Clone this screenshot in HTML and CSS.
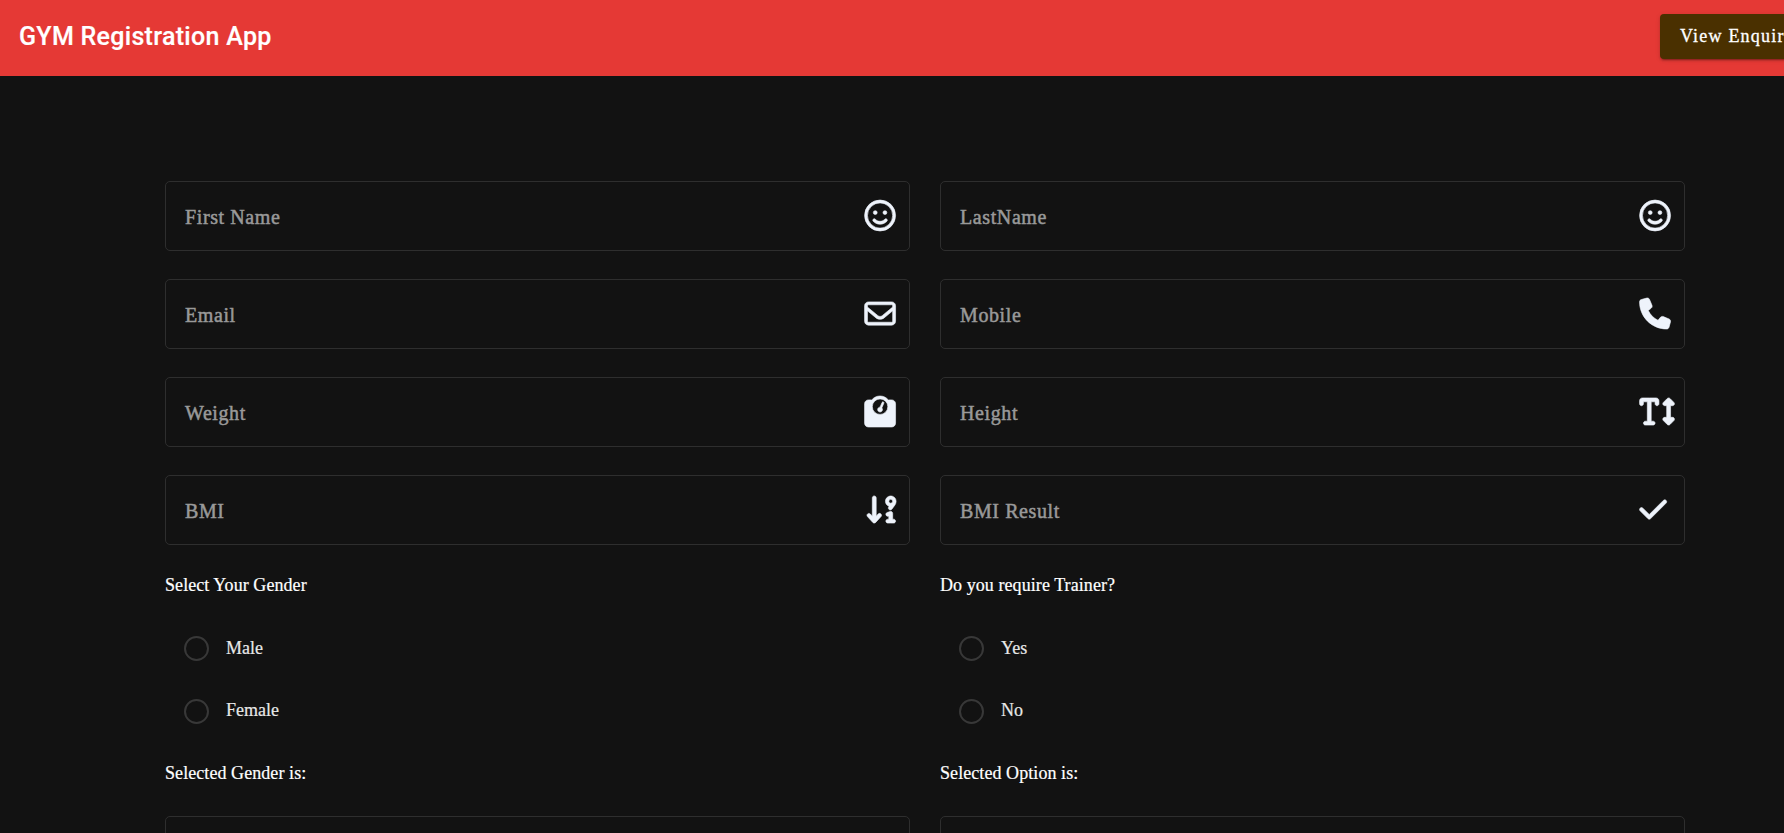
FILE: index.html
```html
<!DOCTYPE html>
<html lang="en">
<head>
<meta charset="utf-8">
<title>GYM Registration App</title>
<link rel="stylesheet" href="styles.css">
</head>
<body>
<header class="toolbar"><span class="title">GYM Registration App</span><button class="enquiry">View Enquiries</button></header>
<main class="form">
<div class="field"><span class="label">First Name</span><svg class="icon" viewBox="0 0 576 512"><path d="M464 256A208 208 0 1 0 48 256a208 208 0 1 0 416 0zM0 256a256 256 0 1 1 512 0A256 256 0 1 1 0 256zm177.600 62.100C192.800 334.500 218.800 352 256 352s63.200-17.500 78.400-33.900c9-9.700 24.200-10.400 33.900-1.400s10.400 24.200 1.400 33.900c-22 23.800-60 49.400-113.600 49.400s-91.700-25.500-113.600-49.400c-9-9.700-8.400-24.900 1.400-33.900s24.900-8.400 33.900 1.400zM144.400 208a32 32 0 1 1 64 0 32 32 0 1 1 -64 0zm192-32a32 32 0 1 1 0 64 32 32 0 1 1 0-64z"/></svg></div>
<div class="field"><span class="label">LastName</span><svg class="icon" viewBox="0 0 576 512"><path d="M464 256A208 208 0 1 0 48 256a208 208 0 1 0 416 0zM0 256a256 256 0 1 1 512 0A256 256 0 1 1 0 256zm177.600 62.100C192.800 334.500 218.800 352 256 352s63.200-17.500 78.400-33.900c9-9.700 24.200-10.400 33.900-1.400s10.400 24.200 1.400 33.900c-22 23.800-60 49.400-113.600 49.400s-91.700-25.500-113.600-49.400c-9-9.700-8.400-24.900 1.400-33.900s24.900-8.400 33.900 1.400zM144.400 208a32 32 0 1 1 64 0 32 32 0 1 1 -64 0zm192-32a32 32 0 1 1 0 64 32 32 0 1 1 0-64z"/></svg></div>
<div class="field"><span class="label">Email</span><svg class="icon" viewBox="0 0 576 512"><path d="M64 112c-8.800 0-16 7.200-16 16v22.100L220.500 291.700c20.700 17 50.400 17 71.100 0L464 150.100V128c0-8.800-7.200-16-16-16H64zM48 212.200V384c0 8.800 7.200 16 16 16H448c8.800 0 16-7.200 16-16V212.200L322 328.800c-38.400 31.500-93.700 31.500-132 0L48 212.200zM0 128C0 92.700 28.700 64 64 64H448c35.300 0 64 28.700 64 64V384c0 35.300-28.700 64-64 64H64c-35.300 0-64-28.700-64-64V128z"/></svg></div>
<div class="field"><span class="label">Mobile</span><svg class="icon" viewBox="0 0 576 512"><path d="M164.900 24.600c-7.700-18.600-28-28.500-47.400-23.200l-88 24C12.100 30.200 0 46 0 64C0 311.400 200.600 512 448 512c18 0 33.800-12.100 38.600-29.500l24-88c5.300-19.400-4.600-39.700-23.200-47.400l-96-40c-16.300-6.800-35.200-2.100-46.300 11.600L304.700 368C234.300 334.700 177.300 277.700 144 207.300L193.300 167c13.700-11.200 18.400-30 11.600-46.300l-40-96z"/></svg></div>
<div class="field"><span class="label">Weight</span><svg class="icon" viewBox="0 0 576 512"><path d="M128 176a128 128 0 1 1 256 0 128 128 0 1 1 -256 0zM391.800 64C359.500 24.900 310.700 0 256 0S152.500 24.900 120.200 64H64C28.700 64 0 92.700 0 128V448c0 35.300 28.700 64 64 64H448c35.300 0 64-28.700 64-64V128c0-35.300-28.700-64-64-64H391.800zM296 224c0-10.600-4.100-20.200-10.900-27.400l33.600-78.300c3.500-8.100-.3-17.500-8.400-21s-17.500 .3-21 8.400L255.700 184c-22 .1-39.700 18-39.700 40c0 22.100 17.900 40 40 40s40-17.900 40-40z"/></svg></div>
<div class="field"><span class="label">Height</span><svg class="icon" viewBox="0 0 576 512"><path d="M64 128V96h64l0 320H96c-17.700 0-32 14.300-32 32s14.300 32 32 32H224c17.700 0 32-14.300 32-32s-14.300-32-32-32H192l0-320h64v32c0 17.700 14.300 32 32 32s32-14.300 32-32V80c0-26.500-21.500-48-48-48H160 48C21.500 32 0 53.500 0 80v48c0 17.700 14.300 32 32 32s32-14.300 32-32zM502.600 41.400c-12.500-12.500-32.800-12.500-45.300 0l-64 64c-9.200 9.200-11.900 22.900-6.900 34.900s16.600 19.800 29.600 19.800h32V352H416c-12.900 0-24.600 7.800-29.600 19.800s-2.200 25.700 6.900 34.900l64 64c12.500 12.500 32.800 12.500 45.300 0l64-64c9.200-9.200 11.900-22.900 6.900-34.900s-16.600-19.800-29.600-19.800H512V160h32c12.900 0 24.600-7.800 29.600-19.800s2.200-25.700-6.900-34.900l-64-64z"/></svg></div>
<div class="field"><span class="label">BMI</span><svg class="icon" viewBox="0 0 576 512"><path d="M160 480c9 0 17.500-3.800 23.600-10.400l88-96c11.900-13 11.100-33.300-2-45.200s-33.300-11.100-45.200 2L192 365.700V64c0-17.700-14.300-32-32-32s-32 14.300-32 32V365.700L95.600 330.400c-11.900-13-32.200-13.900-45.200-2s-13.900 32.200-2 45.200l88 96C142.500 476.200 151 480 160 480zM450.700 294c-8.300-6-19.100-7.700-28.800-4.400l-48 16c-16.800 5.600-25.800 23.700-20.200 40.500s23.700 25.800 40.500 20.200l5.900-2V416H384c-17.700 0-32 14.300-32 32s14.300 32 32 32h48 48c17.700 0 32-14.300 32-32s-14.300-32-32-32H464V320c0-10.300-4.900-19.900-13.300-26zM400 120a32 32 0 1 1 64 0 32 32 0 1 1 -64 0zM405.800 203.800l-6.800 9.200c-10.500 14.200-7.500 34.200 6.700 44.800s34.200 7.500 44.800-6.700l48.800-65.800c14-18.900 21.500-41.700 21.500-65.200c0-48.600-39.400-88-88-88s-88 39.400-88 88c0 39.200 25.600 72.400 61.100 83.800z" fill-rule="evenodd"/></svg></div>
<div class="field"><span class="label">BMI Result</span><svg class="icon" viewBox="0 0 576 512"><path d="M438.600 105.400c12.500 12.500 12.500 32.800 0 45.300l-256 256c-12.500 12.500-32.800 12.500-45.300 0l-128-128c-12.500-12.500-12.500-32.800 0-45.300s32.800-12.500 45.300 0L160 338.700 393.400 105.400c12.500-12.500 32.800-12.500 45.300 0z"/></svg></div>
<section class="choices">
<p class="caption">Select Your Gender</p>
<div class="option"><i class="radio"></i><span>Male</span></div>
<div class="option second"><i class="radio"></i><span>Female</span></div>
<p class="caption">Selected Gender is:</p>
</section>
<section class="choices">
<p class="caption">Do you require Trainer?</p>
<div class="option"><i class="radio"></i><span>Yes</span></div>
<div class="option second"><i class="radio"></i><span>No</span></div>
<p class="caption">Selected Option is:</p>
</section>
<div class="field"></div>
<div class="field"></div>
</main>
</body>
</html>
```
FILE: styles.css
```css
* { box-sizing: border-box; }
html { height: 100%; overflow: hidden; background: #121212; }
body { margin: 0; height: 833px; overflow: hidden; background: #121212; color: #fff; font-family: "Liberation Serif", "Times New Roman", serif; }
.toolbar { display: flex; align-items: center; justify-content: space-between; width: 1840px; height: 76px; padding: 0 0 3px 19px; background: #e53935; }
.title { padding-top: 1px; font: 500 25px/36px Roboto, sans-serif; letter-spacing: .3px; -webkit-text-stroke: .2px #fff; }
.enquiry { flex: none; width: 180px; height: 45px; padding: 0 0 0 20px; border: 0; border-radius: 4px; background: #4a3000; color: #fff; font: 18px/45px "Liberation Serif", serif; letter-spacing: 1.2px; text-align: left; -webkit-text-stroke: .3px #fff; box-shadow: 0 3px 1px -2px rgba(0,0,0,.2), 0 2px 2px rgba(0,0,0,.14), 0 1px 5px rgba(0,0,0,.12); }
.form { display: grid; grid-template-columns: 745px 745px; column-gap: 30px; row-gap: 28px; padding: 105px 0 0 165px; }
.field { display: flex; align-items: center; justify-content: space-between; height: 70px; padding: 0 9px 0 19px; border: 1px solid #2e2e2e; border-radius: 5px; }
.label { padding-top: 2px; color: #999; font-size: 20px; letter-spacing: .6px; -webkit-text-stroke: .5px #999; }
.icon { flex: none; width: 36px; height: 31px; margin-bottom: 2px; fill: #eef3fb; stroke: #eef3fb; stroke-width: 10px; overflow: visible; }
.choices { height: 215px; }
.caption { margin: 0; height: 26px; font-size: 18px; line-height: 24px; letter-spacing: .07px; -webkit-text-stroke: .2px #fff; }
.option { display: flex; align-items: center; gap: 17px; height: 63px; padding-left: 19px; font-size: 18px; color: #e8e8e8; -webkit-text-stroke: .2px #e8e8e8; }
.radio { width: 25px; height: 25px; border: 2px solid #383838; border-radius: 50%; }
.second span { padding-bottom: 2px; }
.caption + .option { margin-top: 18px; }
.option + .caption { margin-top: 18px; }
```
